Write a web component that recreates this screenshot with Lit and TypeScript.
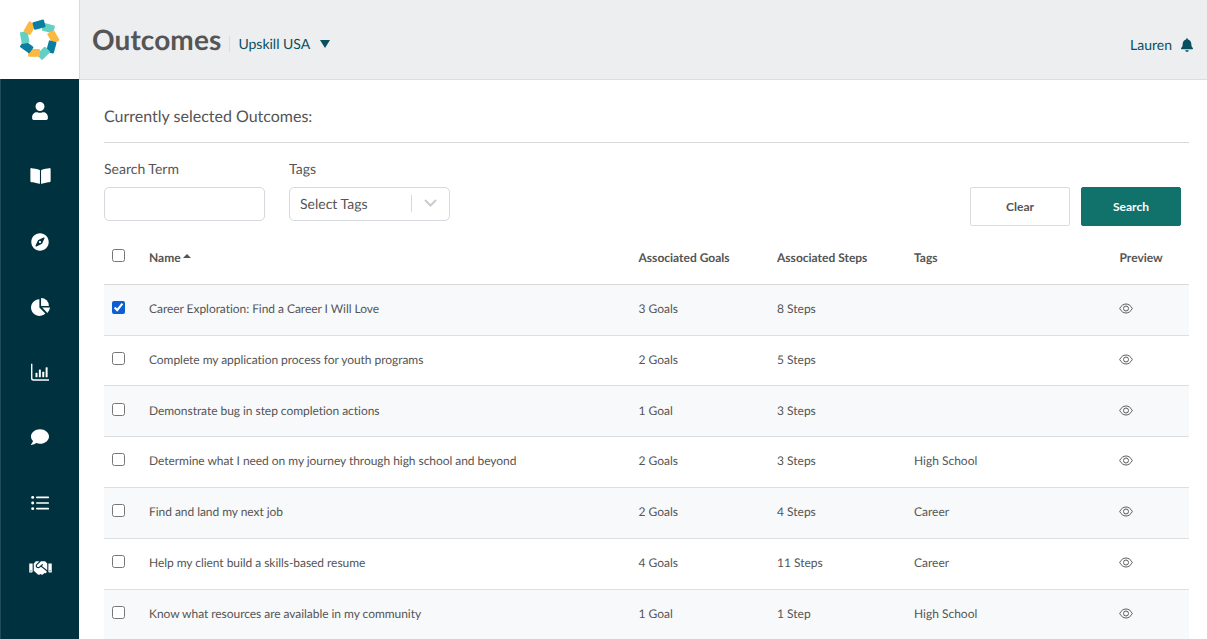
import { LitElement, css, html, svg } from 'lit'
import { customElement, state } from 'lit/decorators.js'

interface Outcome {
  name: string
  goals: string
  steps: string
  tags: string
  selected?: boolean
}

const OUTCOMES: Outcome[] = [
  { name: 'Career Exploration: Find a Career I Will Love', goals: '3 Goals', steps: '8 Steps', tags: '', selected: true },
  { name: 'Complete my application process for youth programs', goals: '2 Goals', steps: '5 Steps', tags: '' },
  { name: 'Demonstrate bug in step completion actions', goals: '1 Goal', steps: '3 Steps', tags: '' },
  { name: 'Determine what I need on my journey through high school and beyond', goals: '2 Goals', steps: '3 Steps', tags: 'High School' },
  { name: 'Find and land my next job', goals: '2 Goals', steps: '4 Steps', tags: 'Career' },
  { name: 'Help my client build a skills-based resume', goals: '4 Goals', steps: '11 Steps', tags: 'Career' },
  { name: 'Know what resources are available in my community', goals: '1 Goal', steps: '1 Step', tags: 'High School' },
]

const navIcons = [
  { w: 16, box: '0 0 448 512', body: svg`<path d="M224 256c70.7 0 128-57.3 128-128S294.7 0 224 0 96 57.3 96 128s57.3 128 128 128zm89.6 32h-16.7c-22.2 10.2-46.9 16-72.9 16s-50.6-5.8-72.9-16h-16.7C60.2 288 0 348.2 0 422.4V464c0 26.5 21.5 48 48 48h352c26.5 0 48-21.5 48-48v-41.6c0-74.2-60.2-134.4-134.4-134.4z"/>` },
  { w: 21, box: '0 0 576 512', body: svg`<path d="M542.22 32.05c-54.8 3.11-163.72 14.43-230.96 55.59-4.64 2.84-7.27 7.89-7.27 13.17v363.87c0 11.55 12.63 18.85 23.28 13.49 69.18-34.82 169.23-44.32 218.7-46.92 16.89-.89 30.02-14.43 30.02-30.66V62.75c.01-17.71-15.35-31.74-33.77-30.7zM264.73 87.64C197.5 46.48 88.58 35.17 33.78 32.05 15.36 31.01 0 45.04 0 62.75V400.6c0 16.24 13.13 29.78 30.02 30.66 49.49 2.6 149.59 12.11 218.77 46.95 10.62 5.35 23.21-1.94 23.21-13.46V100.63c0-5.29-2.62-10.14-7.27-12.99z"/>` },
  { w: 18, box: '0 0 496 512', body: svg`<path d="M225.38 233.37c-12.5 12.5-12.5 32.76 0 45.25 12.49 12.5 32.76 12.5 45.25 0 12.5-12.5 12.5-32.76 0-45.25-12.5-12.49-32.76-12.49-45.25 0zM248 8C111.03 8 0 119.03 0 256s111.03 248 248 248 248-111.03 248-248S384.97 8 248 8zm126.14 148.05L308.17 300.4a31.938 31.938 0 0 1-15.77 15.77l-144.34 65.97c-16.65 7.61-33.81-9.55-26.2-26.2l65.98-144.35a31.938 31.938 0 0 1 15.77-15.77l144.34-65.97c16.65-7.6 33.8 9.55 26.19 26.2z"/>` },
  { w: 19, box: '0 0 544 512', body: svg`<path d="M240 32A240 240 0 1 0 410 442L240 272Z"/><path d="M288 0A224 224 0 0 1 512 224H288Z"/><path d="M320 272H544A240 240 0 0 1 470 425Z"/>` },
  { w: 18, box: '0 8 512 512', body: svg`<path d="M0 32h40v400q0 40 40 40h432v40H72q-72 0-72-72z"/><rect x="128" y="288" width="56" height="128" rx="16"/><rect x="224" y="192" width="56" height="224" rx="16"/><rect x="320" y="256" width="56" height="160" rx="16"/><rect x="416" y="128" width="56" height="288" rx="16"/>` },
  { w: 18, box: '0 0 512 512', body: svg`<path d="M256 32C114.6 32 0 125.1 0 240c0 49.6 21.4 95 57 130.7C44.5 421.1 2.7 466 2.2 466.5c-2.2 2.3-2.8 5.7-1.5 8.7S4.8 480 8 480c66.3 0 116-31.8 140.6-51.4 32.7 12.3 69 19.4 107.4 19.4 141.4 0 256-93.1 256-208S397.4 32 256 32z"/>` },
  { w: 18, box: '0 0 512 512', body: svg`<circle cx="48" cy="96" r="42"/><circle cx="48" cy="256" r="42"/><circle cx="48" cy="416" r="42"/><rect x="144" y="72" width="368" height="48" rx="14"/><rect x="144" y="232" width="368" height="48" rx="14"/><rect x="144" y="392" width="368" height="48" rx="14"/>` },
  { w: 23, box: '0 0 640 512', body: svg`<path d="M434.7 64h-85.9c-8 0-15.7 3-21.6 8.4l-98.3 90c-.1.1-.2.3-.3.4-16.6 15.6-16.3 40.5-2.1 56 12.7 13.9 39.4 17.6 56.1 2.7.1-.1.3-.1.4-.2l79.9-73.2c6.5-5.9 16.7-5.5 22.6 1 6 6.5 5.5 16.6-1 22.6l-26.1 23.9L504 313.8c2.9 2.4 5.5 5 7.9 7.7V128l-54.6-54.6c-5.9-6-14.1-9.4-22.6-9.4zM544 128.2v223.9c0 17.7 14.3 32 32 32h64V128.2h-96zm48 223.9c-8.8 0-16-7.2-16-16s7.2-16 16-16 16 7.2 16 16-7.2 16-16 16zM0 384h64c17.7 0 32-14.3 32-32V128.2H0V384zm48-63.9c8.8 0 16 7.2 16 16s-7.2 16-16 16-16-7.2-16-16c0-8.9 7.2-16 16-16zm435.9 18.6L334.6 217.5l-30 27.5c-29.7 27.1-75.2 24.5-101.7-4.4-26.9-29.4-24.8-74.9 4.4-101.7L289.1 64h-83.8c-8.5 0-16.6 3.4-22.6 9.4L128 128v223.9h18.3l90.5 81.9c27.4 22.3 67.7 18.1 90-9.3l.2-.2 17.9 15.5c15.9 13 39.4 10.5 52.3-5.4l31.4-38.6 5.4 4.4c13.7 11.1 33.9 9.1 45-4.7l9.5-11.7c11.2-13.8 9.1-33.9-4.6-45.1z"/>` },
]

// ring of little blocks: centre x, centre y, rotation, colour
const LOGO_BLOCKS: [number, number, number, string][] = [
  [49, 27, 15, '#64d0c3'],
  [54, 36, 60, '#fdb840'],
  [52, 46, 105, '#0a7ea0'],
  [44, 52.5, 135, '#64d0c3'],
  [34.5, 52, 180, '#fdb840'],
  [27, 46, 215, '#0a7ea0'],
  [25, 36.5, 260, '#64d0c3'],
  [30, 27, 300, '#fdb840'],
  [39.5, 23.5, 345, '#0a7ea0'],
]

@customElement('app-root')
export class AppRoot extends LitElement {
  @state()
  private outcomes = OUTCOMES

  static styles = css`
    :host {
      display: grid;
      grid-template-columns: 80px 1fr;
      grid-template-rows: 80px 1fr;
      height: 100vh;
      overflow: hidden;
      font-family: Lato, sans-serif;
      color: #555;
      background: #fff;
      text-rendering: geometricPrecision;
    }
    .logo {
      background: #fff;
      border-right: 1px solid #d8d9db;
      display: flex;
      align-items: center;
      justify-content: center;
    }
    .topbar {
      background: #eceef0;
      border-bottom: 1px solid #dcdddf;
      display: flex;
      align-items: center;
      padding: 0 14px 0 12px;
    }
    .title {
      font-size: 28px;
      font-weight: 700;
      letter-spacing: 0.1px;
      color: #555;
      margin: 0 8px 0 0;
      padding-bottom: 1px;
    }
    .org {
      border-left: 1px solid #dcdddf;
      padding-left: 8px;
      font-size: 14px;
      color: #07505f;
      display: flex;
      align-items: center;
      gap: 10px;
      margin-top: 9px;
      line-height: 16px;
    }
    .caret {
      width: 0;
      height: 0;
      border-left: 5px solid transparent;
      border-right: 5px solid transparent;
      border-top: 8px solid #07505f;
    }
    .user {
      margin-left: auto;
      display: flex;
      align-items: center;
      gap: 9px;
      font-size: 14px;
      color: #07505f;
      margin-top: 10px;
    }
    .user svg {
      fill: #07505f;
      width: 12px;
      height: 14px;
    }
    .sidebar {
      background: #00313e;
      border-left: 1px solid #1f4c58;
      margin: -1px 1px 0 0;
      display: flex;
      flex-direction: column;
    }
    .nav-item {
      height: 65.3px;
      flex: none;
      display: flex;
      align-items: center;
      justify-content: center;
    }
    .nav-item:first-child {
      margin-top: -0.7px;
    }
    .nav-item svg {
      fill: #fff;
      height: 18px;
    }
    main {
      padding: 0 18px 0 24px;
      min-width: 0;
      overflow: hidden;
    }
    .selected {
      height: 63px;
      border-bottom: 1px solid #d8d9db;
      display: flex;
      align-items: center;
      font-size: 16px;
      color: #555;
      padding-top: 10px;
      box-sizing: border-box;
    }
    .filters {
      display: flex;
      align-items: flex-start;
      margin-top: 17px;
      height: 71px;
    }
    .field {
      display: flex;
      flex-direction: column;
      width: 161px;
      margin-right: 24px;
      font-size: 14px;
      line-height: 17px;
    }
    .field label {
      margin-bottom: 10px;
    }
    .field input,
    .select {
      box-sizing: border-box;
      height: 34px;
      width: 100%;
      border: 1px solid #d5d8dc;
      border-radius: 5px;
      background: #fff;
    }
    .select {
      display: flex;
      align-items: center;
      padding: 0 0 2px 10px;
      font-size: 14px;
    }
    .select span {
      flex: 1;
    }
    .select i {
      width: 1px;
      height: 17px;
      background: #d5d8dc;
    }
    .select svg {
      width: 37px;
      height: 10px;
      stroke: #ccc;
      stroke-width: 2;
      fill: none;
    }
    .actions {
      margin-left: auto;
      margin-top: 27px;
      margin-right: 8px;
      display: flex;
      gap: 11px;
    }
    button {
      box-sizing: border-box;
      width: 100px;
      height: 39px;
      font: 700 12px Lato, sans-serif;
      border-radius: 2px;
      cursor: pointer;
    }
    .clear {
      background: #fff;
      border: 1px solid #dcdcdc;
      color: #555;
    }
    .search {
      background: #10726a;
      border: 1px solid #10726a;
      color: #fff;
    }
    .row {
      display: grid;
      grid-template-columns: 45px 489.5px 138.5px 137px 205.5px 1fr;
      align-items: center;
      box-sizing: border-box;
      font-size: 12px;
      height: 50.85px;
      padding-bottom: 2.6px;
      border-bottom: 1px solid #dcdfe2;
    }
    .row.head {
      font-weight: 700;
      height: 53.7px;
      padding-bottom: 0;
      border-bottom: 1px solid #d8d9db;
    }
    .row:nth-child(even):not(.head) {
      background: #f8f9fa;
    }
    .row .title-cell {
      letter-spacing: -0.05px;
    }
    .row input {
      margin: -2px 0 0 8px;
      width: 13px;
      height: 13px;
      accent-color: #0b5fd0;
    }
    .row.head input {
      margin-top: -3px;
    }
    .name {
      display: flex;
      align-items: center;
      gap: 2px;
    }
    .sort {
      width: 0;
      height: 0;
      border-left: 4px solid transparent;
      border-right: 4px solid transparent;
      border-bottom: 4px solid #555;
      margin-bottom: 2px;
    }
    .eye {
      width: 14px;
      height: 11px;
      margin-left: -0.5px;
      fill: none;
      stroke: #5c5c5c;
      stroke-width: 1;
      display: block;
    }
  `

  private renderLogo() {
    return html`<svg width="80" height="79" viewBox="0 0 80 79">
      ${LOGO_BLOCKS.map(([x, y, r, c]) => svg`<rect x="${x - 6}" y="${y - 4}" width="12" height="8" rx="1" fill="${c}" transform="rotate(${r} ${x} ${y})"/>`)}
    </svg>`
  }

  render() {
    return html`
      <div class="logo">${this.renderLogo()}</div>
      <header class="topbar">
        <h1 class="title">Outcomes</h1>
        <div class="org">Upskill USA <span class="caret"></span></div>
        <div class="user">
          Lauren
          <svg viewBox="0 0 448 512"><path d="M224 512c35.32 0 63.97-28.65 63.97-64H160.03c0 35.35 28.65 64 63.97 64zm215.39-149.71c-19.32-20.76-55.47-51.99-55.47-154.29 0-77.7-54.48-139.9-127.94-155.16V32c0-17.67-14.32-32-31.98-32s-31.98 14.33-31.98 32v20.84C118.56 68.1 64.08 130.3 64.08 208c0 102.3-36.15 133.53-55.47 154.29-6 6.45-8.66 14.16-8.61 21.71.11 16.4 12.98 32 32.1 32h383.8c19.12 0 32-15.6 32.1-32 .05-7.55-2.61-15.27-8.61-21.71z"/></svg>
        </div>
      </header>
      <nav class="sidebar">
        ${navIcons.map(i => html`<div class="nav-item"><svg viewBox=${i.box} style="width:${i.w}px">${i.body}</svg></div>`)}
      </nav>
      <main>
        <div class="selected">Currently selected Outcomes:</div>
        <div class="filters">
          <div class="field">
            <label>Search Term</label>
            <input type="text" />
          </div>
          <div class="field">
            <label>Tags</label>
            <div class="select">
              <span>Select Tags</span>
              <i></i>
              <svg viewBox="0 0 37 10"><path d="M13 2l5.5 5.5L24 2" /></svg>
            </div>
          </div>
          <div class="actions">
            <button class="clear">Clear</button>
            <button class="search">Search</button>
          </div>
        </div>
        <div class="table">
          <div class="row head">
            <input type="checkbox" />
            <div class="name">Name <span class="sort"></span></div>
            <div>Associated Goals</div>
            <div>Associated Steps</div>
            <div>Tags</div>
            <div>Preview</div>
          </div>
          ${this.outcomes.map(o => html`
            <div class="row">
              <input type="checkbox" .checked=${!!o.selected} />
              <div class="title-cell">${o.name}</div>
              <div>${o.goals}</div>
              <div>${o.steps}</div>
              <div>${o.tags}</div>
              <svg class="eye" viewBox="0 0 14 11"><path d="M.7 5.5C2.2 2.6 4.4 1 7 1s4.8 1.6 6.3 4.5C11.800 8.400 9.600 10 7 10S2.200 8.400.7 5.500z"/><circle cx="7" cy="5.500" r="2.500"/></svg>
            </div>
          `)}
        </div>
      </main>
    `
  }
}
